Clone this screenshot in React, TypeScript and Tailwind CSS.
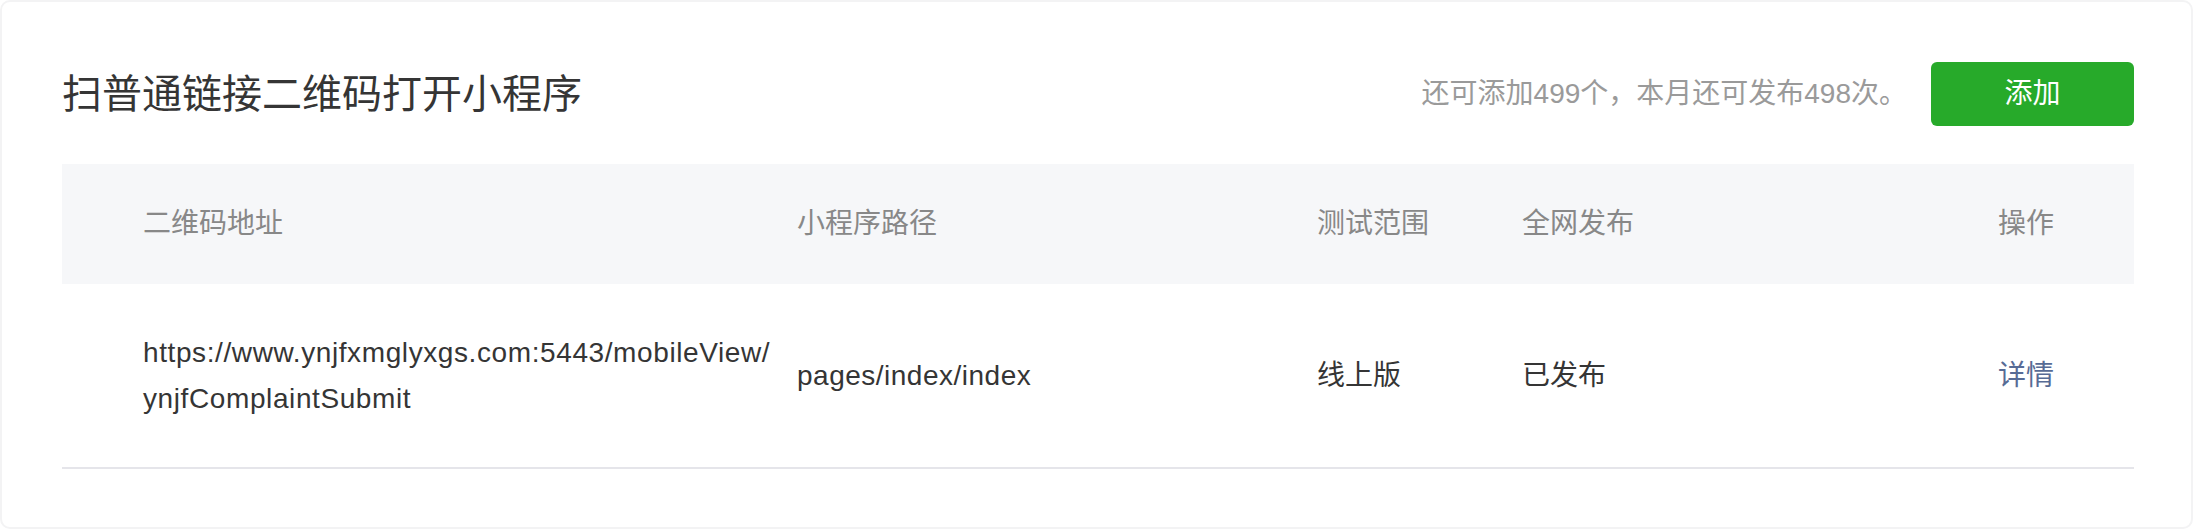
import React from "react";

const font = {
  fontFamily:
    '"Liberation Sans", "Noto Sans CJK SC", Arial, sans-serif',
};

export default function App() {
  return (
    <div className="w-[2194px] bg-white" style={font}>
      <div className="box-border h-[529px] w-[2193px] rounded-[10px] border-2 border-[#f3f3f4] bg-white pl-[60px] pr-[57px] pt-[60px]">
        <div className="flex h-[64px] items-center justify-between">
          <h1 className="text-[40px] font-normal leading-[64px] text-[#353535]">
            扫普通链接二维码打开小程序
          </h1>
          <div className="flex items-center gap-[24px]">
            <span className="text-[28px] leading-[40px] text-[#9a9a9a]">
              还可添加499个，本月还可发布498次。
            </span>
            <button className="h-[64px] w-[203px] rounded-[6px] bg-[#27aa2a] text-[28px] text-white">
              添加
            </button>
          </div>
        </div>

        <div className="mt-[38px]">
          <div className="grid h-[120px] grid-cols-[735px_520px_205px_476px_136px] items-center bg-[#f6f7f9] text-[28px] text-[#888888]">
            <div className="pl-[81px]">二维码地址</div>
            <div>小程序路径</div>
            <div>测试范围</div>
            <div>全网发布</div>
            <div>操作</div>
          </div>
          <div className="grid h-[185px] grid-cols-[735px_520px_205px_476px_136px] items-center border-b-2 border-[#e5e5ea] text-[28px] text-[#353535]">
            <div className="pl-[81px] leading-[46px] tracking-[0.6px]">
              https://www.ynjfxmglyxgs.com:5443/mobileView/
              <br />
              ynjfComplaintSubmit
            </div>
            <div className="tracking-[0.5px]">pages/index/index</div>
            <div>线上版</div>
            <div>已发布</div>
            <div className="text-[#576b95]">详情</div>
          </div>
        </div>
      </div>
    </div>
  );
}
